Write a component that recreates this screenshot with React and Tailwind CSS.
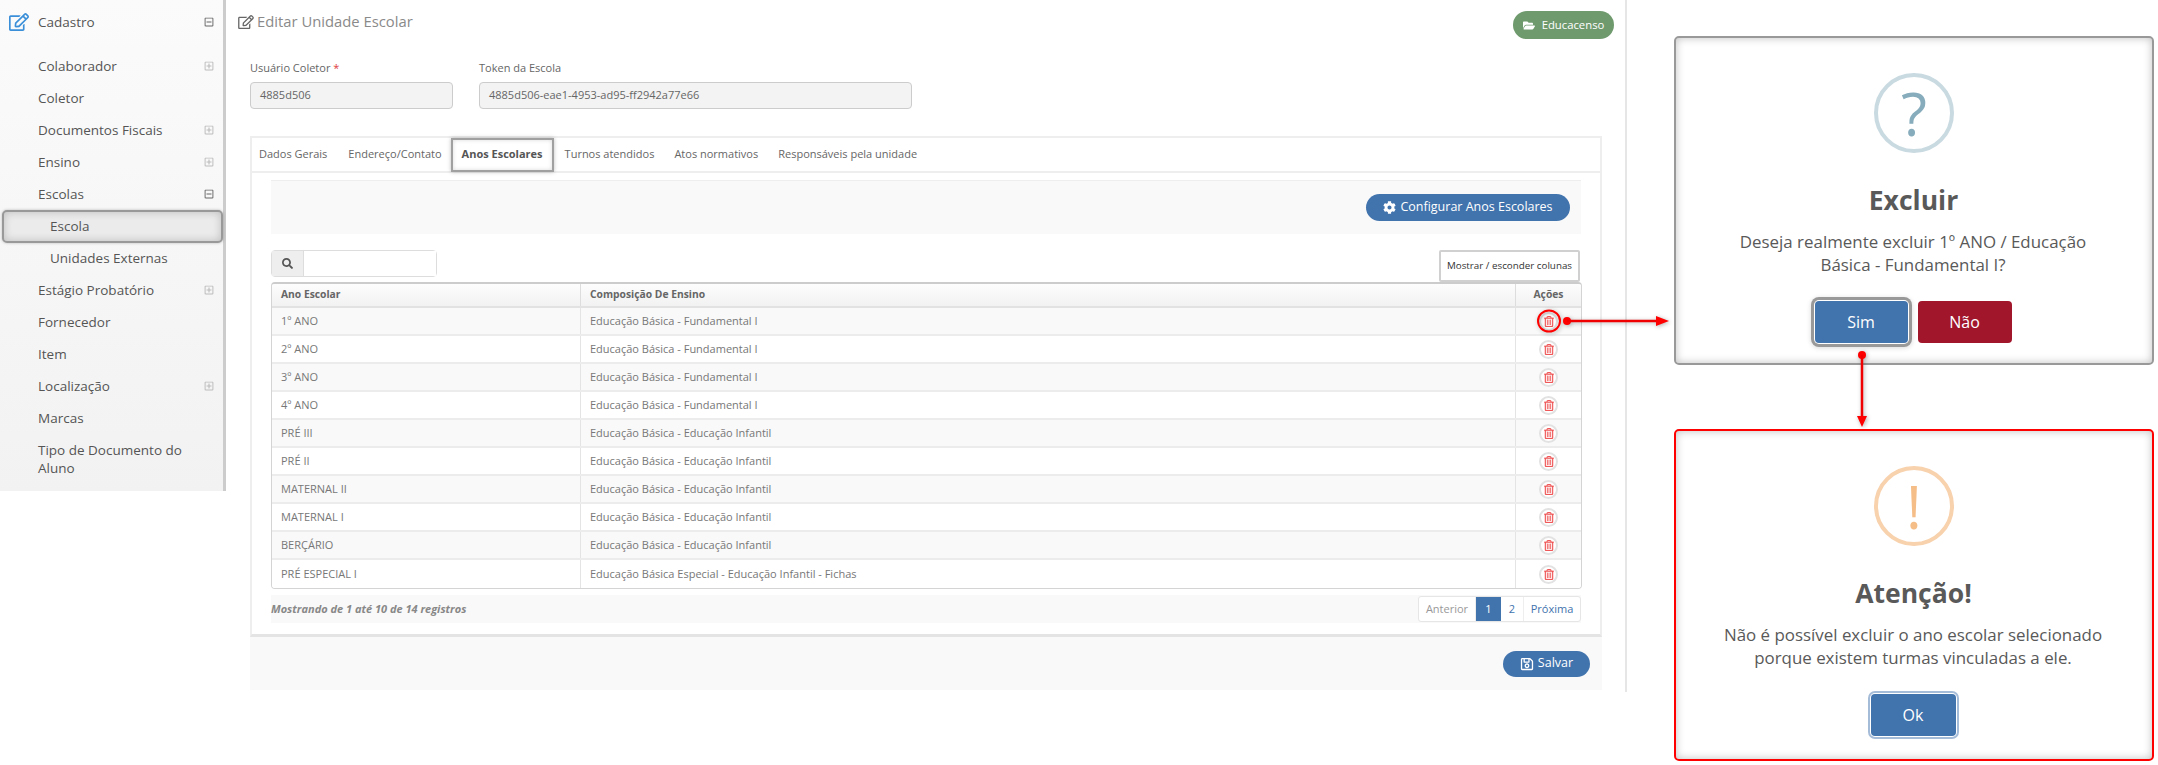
import React from "react";
import { FaRegEdit, FaRegPlusSquare, FaRegMinusSquare, FaFolderOpen, FaCog, FaSearch, FaRegTrashAlt, FaRegSave } from "react-icons/fa";

const side = [
  { t: "Colaborador", i: "p" },
  { t: "Coletor" },
  { t: "Documentos Fiscais", i: "p" },
  { t: "Ensino", i: "p" },
  { t: "Escolas", i: "m" },
  { t: "Escola", sub: true, active: true },
  { t: "Unidades Externas", sub: true },
  { t: "Estágio Probatório", i: "p" },
  { t: "Fornecedor" },
  { t: "Item" },
  { t: "Localização", i: "p" },
  { t: "Marcas" },
];

const rows = [
  ["1º ANO", "Educação Básica - Fundamental I"],
  ["2º ANO", "Educação Básica - Fundamental I"],
  ["3º ANO", "Educação Básica - Fundamental I"],
  ["4º ANO", "Educação Básica - Fundamental I"],
  ["PRÉ III", "Educação Básica - Educação Infantil"],
  ["PRÉ II", "Educação Básica - Educação Infantil"],
  ["MATERNAL II", "Educação Básica - Educação Infantil"],
  ["MATERNAL I", "Educação Básica - Educação Infantil"],
  ["BERÇÁRIO", "Educação Básica - Educação Infantil"],
  ["PRÉ ESPECIAL I", "Educação Básica Especial - Educação Infantil - Fichas"],
];

const tabs = ["Dados Gerais", "Endereço/Contato", "Anos Escolares", "Turnos atendidos", "Atos normativos", "Responsáveis pela unidade"];

function Sidebar() {
  return (
    <aside className="w-[226px] h-[491px] shrink-0 border-r-[3px] border-[#cccccc] bg-gradient-to-b from-[#fbfbfb] to-[#f2f2f2] text-[13.5px] text-[#555555]">
      <div className="h-[44px] flex items-center pl-[9px] pr-[9px]">
        <FaRegEdit className="text-[#3b8fd9] text-[18px] w-[20px] h-[18px]" />
        <span className="ml-[9px] flex-1">Cadastro</span>
        <FaRegMinusSquare className="text-[#666666] text-[10px] w-[10px] h-[10px]" />
      </div>
      <div className="h-[6px]" />
      {side.map((s) =>
        s.active ? (
          <div key={s.t} className="h-[32px] flex items-center">
            <div className="ml-[2px] w-[221px] h-[33px] flex items-center pl-[46px] border-2 border-[#999999] rounded-[5px] bg-[#ebebeb] shadow-[inset_0_0_8px_rgba(0,0,0,0.2),0_0_3px_rgba(0,0,0,0.25)]">
              {s.t}
            </div>
          </div>
        ) : (
          <div key={s.t} className={`h-[32px] flex items-center pr-[9px] ${s.sub ? "pl-[50px]" : "pl-[38px]"}`}>
            <span className="flex-1">{s.t}</span>
            {s.i === "p" && <FaRegPlusSquare className="text-[#bbbbbb] w-[10px] h-[10px]" />}
            {s.i === "m" && <FaRegMinusSquare className="text-[#666666] w-[10px] h-[10px]" />}
          </div>
        )
      )}
      <div className="pl-[38px] pr-[10px] pt-[7px] leading-[18px]">Tipo de Documento do Aluno</div>
    </aside>
  );
}

function Field({ label, required, value, width }) {
  return (
    <div style={{ width }} className="shrink-0">
      <div className="h-[18px] text-[11px] leading-[18px] text-[#666666]">
        {label}
        {required && <span className="text-[#e04040]"> *</span>}
      </div>
      <div className="mt-[5px] h-[27px] flex items-center px-[9px] bg-[#f3f3f3] border border-[#cccccc] rounded-[4px] text-[11px] text-[#666666]">
        {value}
      </div>
    </div>
  );
}

function Pill({ icon, children, cls }) {
  return (
    <div className={`flex items-center justify-center rounded-full text-white ${cls}`}>
      {icon}
      {children}
    </div>
  );
}

function Table() {
  return (
    <div className="-mr-[1px] border border-[#d4d4d4] border-t-2 border-t-[#cccccc] rounded-[4px] text-[11px] text-[#777777] overflow-hidden">
      <div className="h-[24px] flex items-center font-bold text-[10.3px] text-[#666666] bg-gradient-to-b from-[#fdfdfd] to-[#f2f2f2] border-b-2 border-[#e2e2e2]">
        <div className="w-[309px] h-full flex items-center pl-[9px] border-r border-[#dddddd]">Ano Escolar</div>
        <div className="flex-1 h-full flex items-center pl-[9px] border-r border-[#dddddd]">Composição De Ensino</div>
        <div className="w-[65px] h-full flex items-center justify-center">Ações</div>
      </div>
      {rows.map((r, i) => (
        <div key={r[0]} className={`h-[28px] flex items-center ${i < 9 ? "border-b-2 border-[#ececec]" : ""} ${i % 2 === 0 ? "bg-[#f9f9f9]" : "bg-white"}`}>
          <div className="w-[309px] h-full flex items-center pl-[9px] border-r border-[#e4e4e4]">{r[0]}</div>
          <div className="flex-1 h-full flex items-center pl-[9px] border-r border-[#e4e4e4]">{r[1]}</div>
          <div className="w-[65px] h-full flex items-center justify-center">
            <div className="w-[19px] h-[19px] rounded-full bg-white border-2 border-[#e2e2e2] flex items-center justify-center">
              <FaRegTrashAlt className="text-[#f05a5a] w-[10px] h-[11px] stroke-[10px]" />
            </div>
          </div>
        </div>
      ))}
    </div>
  );
}

function Main() {
  return (
    <main className="w-[1401px] h-[692px] shrink-0 border-r-2 border-[#e6e6e6] pl-[24px] pr-[22px] flex flex-col">
      <div className="h-[44px] flex items-center relative">
        <FaRegEdit className="text-[#666666] w-[16px] h-[14px] -ml-[12px] mt-[-1px]" />
        <span className="ml-[3px] text-[14.8px] text-[#8a8a8a] flex-1 mt-[-1px]">Editar Unidade Escolar</span>
        <Pill cls="w-[101px] h-[28px] mr-[-11px] mt-[6px] bg-[#6f9a6e] text-[11.3px] gap-[7px]" icon={<FaFolderOpen className="w-[12px] h-[11px]" />}>
          Educacenso
        </Pill>
      </div>
      <div className="mt-[15px] flex gap-[26px]">
        <Field label="Usuário Coletor" required value="4885d506" width={203} />
        <Field label="Token da Escola" value="4885d506-eae1-4953-ad95-ff2942a77e66" width={433} />
      </div>
      <div className="mt-[27px] w-[1352px] h-[501px] border-2 border-[#eeeeee] border-b-[3px] border-b-[#e4e4e4] flex flex-col">
        <div className="h-[33px] flex items-center border-b-2 border-[#eeeeee] box-content text-[11px] text-[#666666] pl-[7px]">
          {tabs.map((t, i) =>
            i === 2 ? (
              <div key={t} className="h-[34px] w-[103px] ml-[9px] mr-[11px] flex items-center justify-center font-bold text-[#555555] border-2 border-[#a0a0a0] bg-white shadow-[0_0_4px_rgba(0,0,0,0.25),inset_0_0_4px_rgba(0,0,0,0.15)]">
                {t}
              </div>
            ) : (
              <div key={t} className={i === 0 ? "" : i === 1 ? "ml-[21px]" : i === 3 ? "" : "ml-[20px]"}>
                {t}
              </div>
            )
          )}
        </div>
        <div className="px-[19px] pt-[7px]">
          <div className="h-[54px] bg-[#f9f9f9] border-t border-[#eeeeee] flex items-center justify-end pr-[11px]">
            <Pill cls="w-[204px] h-[27px] bg-[#4173ad] text-[12.5px] gap-[4px] font-normal" icon={<FaCog className="w-[13px] h-[13px]" />}>
              Configurar Anos Escolares
            </Pill>
          </div>
          <div className="mt-[16px] h-[32px] flex justify-between items-start">
            <div className="flex w-[166px] h-[27px] border border-[#dddddd] rounded-[4px]">
              <div className="w-[32px] bg-[#eeeeee] border-r border-[#dddddd] flex items-center justify-center">
                <FaSearch className="text-[#555555] w-[11px] h-[11px]" />
              </div>
              <div className="flex-1 bg-white" />
            </div>
            <div className="w-[141px] h-[32px] mr-[1px] flex items-center justify-center border-2 border-[#d0d0d0] rounded-[2px] bg-white text-[9.8px] text-[#333333]">
              Mostrar / esconder colunas
            </div>
          </div>
          <Table />
          <div className="mt-[6px] h-[28px] bg-[#f9f9f9] flex items-center justify-between">
            <em className="font-bold text-[11px] text-[#888888]">Mostrando de 1 até 10 de 14 registros</em>
            <div className="flex h-[26px] border border-[#e6e6e6] rounded-[3px] bg-white text-[11px] text-[#4173ad]">
              <div className="w-[57px] flex items-center justify-center text-[#999999] border-r border-[#eeeeee]">Anterior</div>
              <div className="w-[25px] flex items-center justify-center bg-[#4173ad] text-white">1</div>
              <div className="w-[23px] flex items-center justify-center border-r border-[#eeeeee]">2</div>
              <div className="w-[56px] flex items-center justify-center">Próxima</div>
            </div>
          </div>
        </div>
      </div>
      <div className="w-[1352px] h-[53px] bg-[#f9f9f9] flex items-center justify-end pr-[12px]">
        <Pill cls="w-[87px] h-[26px] bg-[#4173ad] text-[12.5px] gap-[4px]" icon={<FaRegSave className="w-[14px] h-[14px]" />}>
          Salvar
        </Pill>
      </div>
    </main>
  );
}

function Modal({ cls, icon, iconCls, circleCls, title, lines, children, h }) {
  return (
    <div style={{ height: h }} className={`w-[480px] border-2 rounded-[5px] bg-white flex flex-col items-center shadow-[inset_0_0_8px_rgba(0,0,0,0.25)] ${cls}`}>
      <div className={`mt-[35px] w-[80px] h-[80px] rounded-full border-4 flex items-center justify-center text-[60px] leading-none ${circleCls} ${iconCls}`}>
        {icon}
      </div>
      <div className="mt-[28px] h-[40px] -ml-[1px] flex items-center text-[26.5px] font-bold text-[#595959]">{title}</div>
      <div className="mt-[9px] -ml-[2px] text-center text-[16.9px] leading-[23px] text-[#595959]">
        {lines.map((l) => (
          <div key={l}>{l}</div>
        ))}
      </div>
      {children}
    </div>
  );
}

function Overlay() {
  return (
    <svg className="absolute left-0 top-0 pointer-events-none drop-shadow-[1px_1px_2px_rgba(0,0,0,0.3)]" width="2158" height="765" fill="none">
      <ellipse cx="1549" cy="321" rx="11" ry="10.5" stroke="#ff0000" strokeWidth="2" />
      <circle cx="1567" cy="321" r="4" fill="#ff0000" />
      <line x1="1567" y1="321" x2="1660" y2="321" stroke="#f00000" strokeWidth="2.5" />
      <polygon points="1656,316 1669,321 1656,326" fill="#ff0000" />
      <circle cx="1862" cy="355" r="4" fill="#ff0000" />
      <line x1="1862" y1="355" x2="1862" y2="420" stroke="#f00000" strokeWidth="2.5" />
      <polygon points="1857,416 1862,427 1867,416" fill="#ff0000" />
    </svg>
  );
}

export default function App() {
  return (
    <div className="relative w-[2158px] h-[765px] bg-white overflow-hidden font-['Open_Sans','Noto_Sans',sans-serif]">
      <div className="flex">
        <Sidebar />
        <Main />
        <div className="pl-[47px] pt-[36px] flex flex-col gap-[64px]">
          <Modal h={329} cls="border-[#999999]" circleCls="border-[#c9dae1]" iconCls="text-[#87adbd]" icon="?" title="Excluir"
            lines={["Deseja realmente excluir 1º ANO / Educação", "Básica - Fundamental I?"]}>
            <div className="mt-[25px] flex gap-[10px] items-center -ml-[2px]">
              <div className="w-[93px] h-[42px] rounded-[4px] bg-[#4173ad] text-white text-[16px] flex items-center justify-center shadow-[0_0_0_1px_#ffffff,0_0_0_4px_#999999,0_1px_5px_4px_rgba(0,0,0,0.15)]">Sim</div>
              <div className="w-[94px] h-[42px] rounded-[4px] bg-[#a2162c] text-white text-[16px] flex items-center justify-center">Não</div>
            </div>
          </Modal>
          <Modal h={332} cls="border-[#ff0000]" circleCls="border-[#f8d1ad]" iconCls="text-[#f5bd87]" icon="!" title="Atenção!"
            lines={["Não é possível excluir o ano escolar selecionado", "porque existem turmas vinculadas a ele."]}>
            <div className="mt-[25px] w-[85px] h-[42px] -ml-[2px] rounded-[4px] bg-[#4173ad] text-white text-[16px] flex items-center justify-center shadow-[0_0_0_1px_#ffffff,0_0_0_3px_#a5bcd8]">Ok</div>
          </Modal>
        </div>
      </div>
      <Overlay />
    </div>
  );
}
